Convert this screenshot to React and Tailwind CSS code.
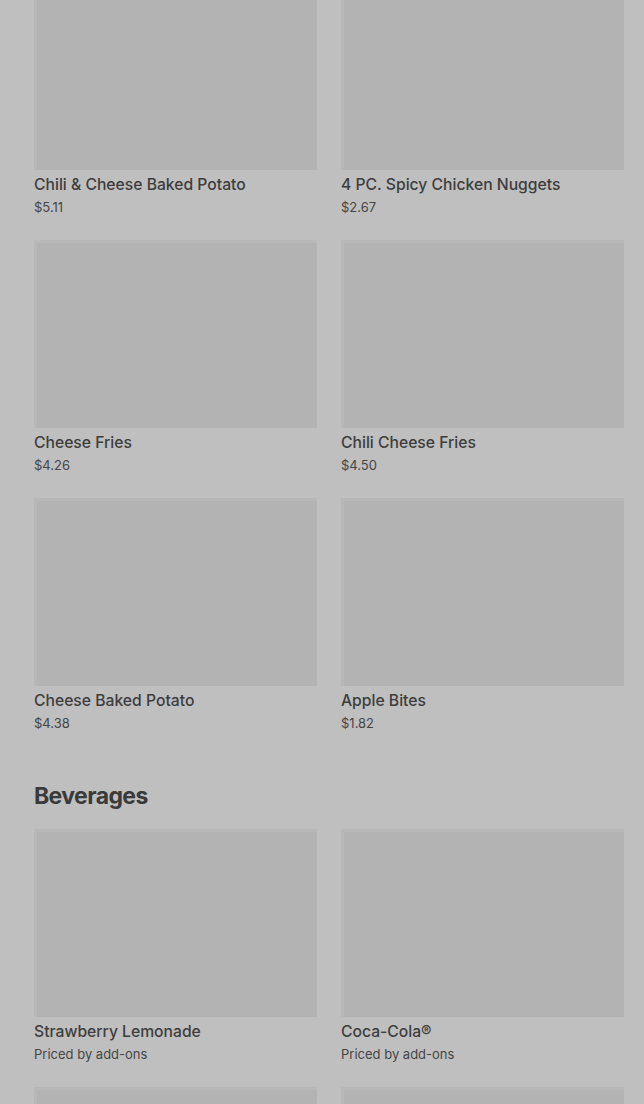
import React from "react";

const rows1 = [
  [
    { name: "Chili & Cheese Baked Potato", price: "$5.11" },
    { name: "4 PC. Spicy Chicken Nuggets", price: "$2.67" },
  ],
  [
    { name: "Cheese Fries", price: "$4.26" },
    { name: "Chili Cheese Fries", price: "$4.50" },
  ],
  [
    { name: "Cheese Baked Potato", price: "$4.38" },
    { name: "Apple Bites", price: "$1.82" },
  ],
];

const bev = [
  { name: "Strawberry Lemonade", price: "Priced by add-ons" },
  { name: "Coca-Cola®", price: "Priced by add-ons" },
  { name: "", price: "" },
  { name: "", price: "" },
];

function Card({ item }) {
  return (
    <div className="flex flex-col">
      <div className="h-[188px] w-full bg-[#b3b3b3] border-t-[3px] border-l-[3px] border-[#b8b8b8]" />
      <div className="mt-[5px] text-[15.7px] leading-5 font-medium text-[#3d3d3d]">
        {item.name}
      </div>
      <div className="mt-[2px] text-[13px] leading-5 text-[#464646]">
        {item.price}
      </div>
    </div>
  );
}

export default function App() {
  return (
    <div
      className="w-[644px] h-[1104px] overflow-hidden bg-[#bfbfbf]"
      style={{ fontFamily: "Inter, 'Noto Sans', sans-serif" }}
    >
      <div className="-mt-[18px] pl-[34px] pr-[20px]">
        <div className="grid grid-cols-2 gap-x-[24px] gap-y-[23px]">
          {rows1.flat().map((it, i) => (
            <Card key={i} item={it} />
          ))}
        </div>
        <h2 className="mt-[47px] text-[23px] leading-8 font-bold tracking-[-0.6px] text-[#3a3a3a]">
          Beverages
        </h2>
        <div className="mt-[17px] grid grid-cols-2 gap-x-[24px] gap-y-[23px]">
          {bev.map((it, i) => (
            <Card key={i} item={it} />
          ))}
        </div>
      </div>
    </div>
  );
}
